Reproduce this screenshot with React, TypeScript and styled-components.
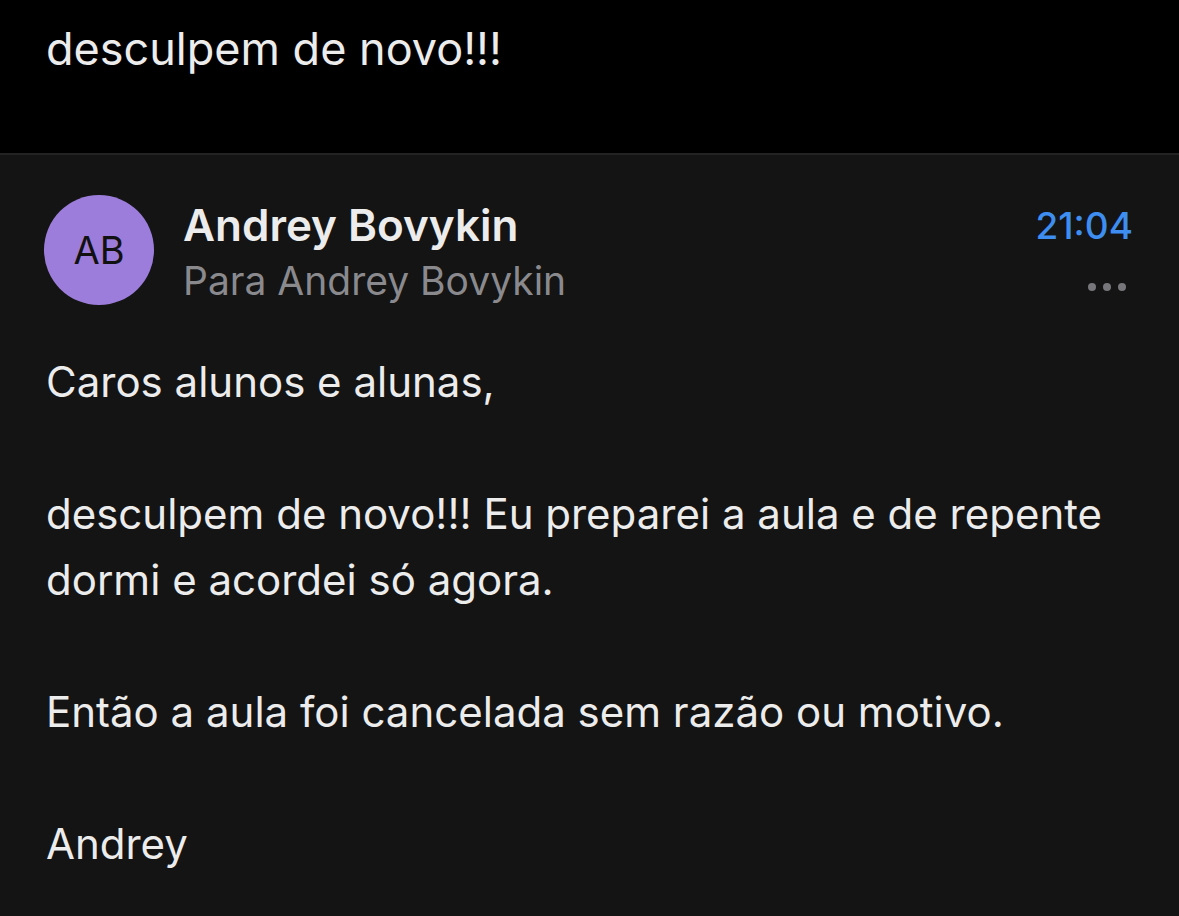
import styled, { createGlobalStyle } from "styled-components";

const GlobalStyle = createGlobalStyle`
  html, body {
    margin: 0;
    padding: 0;
    background: #141414;
  }
  body {
    font-family: Inter, "Noto Sans", sans-serif;
    -webkit-font-smoothing: antialiased;
  }
`;

const Page = styled.div`
  width: 1179px;
  height: 916px;
  overflow: hidden;
  background: #141414;
  display: flex;
  flex-direction: column;
`;

const SubjectBar = styled.div`
  height: 155px;
  box-sizing: border-box;
  background: #000;
  border-bottom: 2px solid #232323;
  padding: 21px 46px 0;
`;

const Subject = styled.h1`
  margin: 0;
  font-size: 45px;
  font-weight: 400;
  line-height: 56px;
  color: #ececec;
`;

const Message = styled.div`
  padding: 40px 46px 0 44px;
  display: flex;
  flex-direction: column;
`;

const Header = styled.div`
  display: flex;
  align-items: flex-start;
  gap: 29px;
`;

const Avatar = styled.div`
  width: 110px;
  height: 110px;
  border-radius: 50%;
  background: #9d7ddb;
  color: #111;
  display: flex;
  align-items: center;
  justify-content: center;
  font-size: 38px;
  font-weight: 400;
  flex-shrink: 0;
`;

const Sender = styled.div`
  flex: 1;
  display: flex;
  flex-direction: column;
  padding-top: 2px;
`;

const Name = styled.div`
  font-size: 44px;
  font-weight: 600;
  line-height: 56px;
  color: #ececec;
`;

const Recipient = styled.div`
  font-size: 39px;
  line-height: 56px;
  color: #8a8a8e;
`;

const Meta = styled.div`
  display: flex;
  flex-direction: column;
  align-items: flex-end;
  gap: 34px;
  padding-top: 8px;
`;

const Time = styled.div`
  font-size: 37px;
  font-weight: 500;
  line-height: 46px;
  color: #3d8ef0;
`;

const Dots = styled.div`
  display: flex;
  gap: 7px;
  margin-right: 7px;
`;

const Dot = styled.span`
  width: 8px;
  height: 8px;
  border-radius: 50%;
  background: #77777b;
`;

const Body = styled.div`
  margin-top: 40px;
  padding-left: 2px;
  display: flex;
  flex-direction: column;
  gap: 66px;
`;

const Paragraph = styled.p`
  margin: 0;
  font-size: 42px;
  line-height: 66px;
  color: #ececec;
  max-width: 1090px;
`;

const paragraphs = [
  "Caros alunos e alunas,",
  "desculpem de novo!!! Eu preparei a aula e de repente dormi e acordei só agora.",
  "Então a aula foi cancelada sem razão ou motivo.",
  "Andrey",
];

const App = () => (
  <Page>
    <GlobalStyle />
    <SubjectBar>
      <Subject>desculpem de novo!!!</Subject>
    </SubjectBar>
    <Message>
      <Header>
        <Avatar>AB</Avatar>
        <Sender>
          <Name>Andrey Bovykin</Name>
          <Recipient>Para Andrey Bovykin</Recipient>
        </Sender>
        <Meta>
          <Time>21:04</Time>
          <Dots>
            <Dot />
            <Dot />
            <Dot />
          </Dots>
        </Meta>
      </Header>
      <Body>
        {paragraphs.map((text) => (
          <Paragraph key={text}>{text}</Paragraph>
        ))}
      </Body>
    </Message>
  </Page>
);

export default App;
